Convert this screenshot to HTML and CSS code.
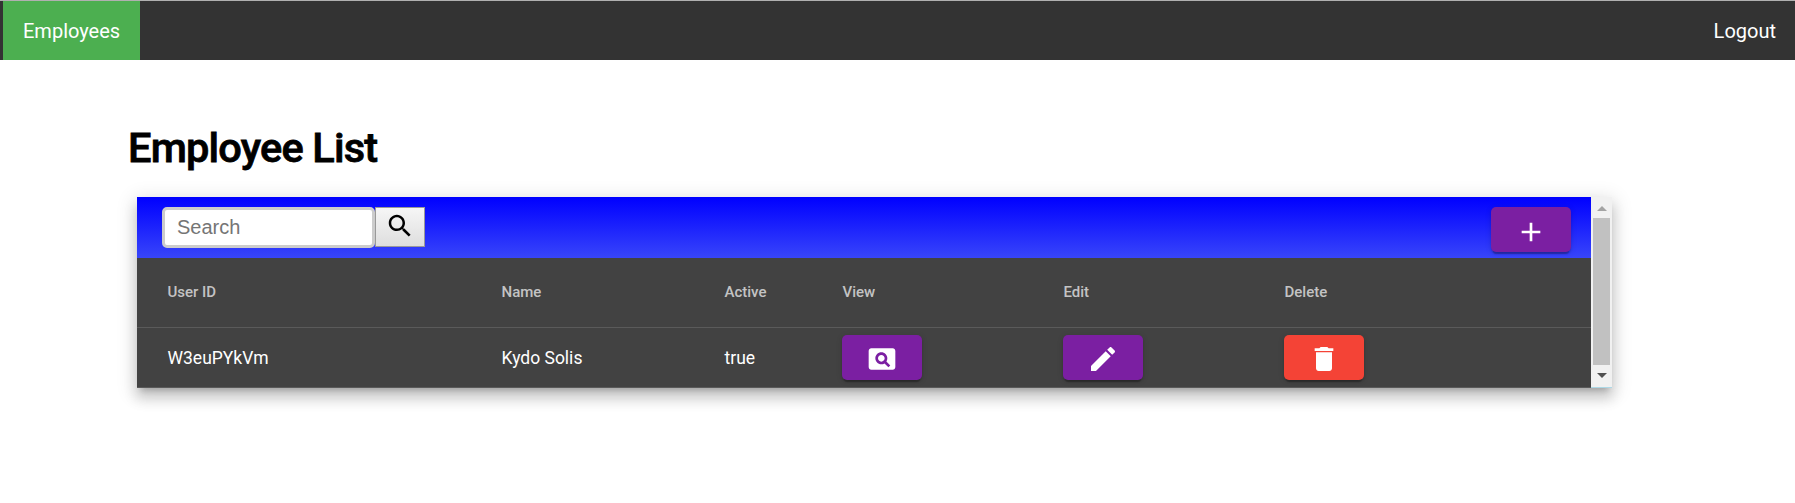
FILE: index.html
```html
<!DOCTYPE html>
<html lang="en">
<head>
<meta charset="utf-8">
<title>Employee List</title>
<link rel="stylesheet" href="styles.css">
</head>
<body>
<nav class="nav">
  <a class="nav-link active">Employees</a>
  <a class="nav-link">Logout</a>
</nav>
<main class="page">
  <h1 class="title">Employee List</h1>
  <section class="card">
    <div class="content">
      <div class="toolbar">
        <div class="search">
          <input class="search-input" type="text" placeholder="Search">
          <button class="search-btn" aria-label="Search"><svg viewBox="0 0 24 24"><path d="M15.5 14h-.79l-.28-.27C15.41 12.59 16 11.11 16 9.5 16 5.91 13.09 3 9.5 3S3 5.91 3 9.5 5.91 16 9.5 16c1.61 0 3.09-.59 4.23-1.57l.27.28v.79l5 4.99L20.49 19l-4.99-5zm-6 0C7.01 14 5 11.99 5 9.5S7.01 5 9.5 5 14 7.01 14 9.5 11.99 14 9.5 14z"/></svg></button>
        </div>
        <button class="btn add" aria-label="Add"><svg viewBox="0 0 24 24"><path d="M19 13h-6v6h-2v-6H5v-2h6V5h2v6h6v2z"/></svg></button>
      </div>
      <div class="row head">
        <span>User ID</span><span>Name</span><span>Active</span><span>View</span><span>Edit</span><span>Delete</span>
      </div>
      <div class="row">
        <span>W3euPYkVm</span><span>Kydo Solis</span><span>true</span>
        <button class="btn" aria-label="View"><svg viewBox="0 0 24 24"><path d="M11.5 9C10.12 9 9 10.12 9 11.5s1.12 2.5 2.5 2.5 2.500-1.120 2.500-2.500S12.880 9 11.500 9zM20 4H4c-1.100 0-2 .9-2 2v12c0 1.100.9 2 2 2h16c1.100 0 2-.9 2-2V6c0-1.100-.9-2-2-2zm-3.210 14.210l-2.910-2.910c-.69.44-1.510.7-2.390.7C9.010 16 7 13.990 7 11.500S9.010 7 11.500 7 16 9.010 16 11.500c0 .88-.26 1.690-.7 2.390l2.910 2.900-1.420 1.420z"/></svg></button>
        <button class="btn" aria-label="Edit"><svg viewBox="0 0 24 24"><path d="M3 17.25V21h3.750L17.810 9.940l-3.750-3.750L3 17.250zM20.710 7.040c.39-.39.39-1.020 0-1.410l-2.340-2.340c-.39-.39-1.020-.39-1.410 0l-1.830 1.830 3.750 3.750 1.830-1.830z"/></svg></button>
        <button class="btn warn" aria-label="Delete"><svg viewBox="0 0 24 24"><path d="M6 19c0 1.100.9 2 2 2h8c1.100 0 2-.9 2-2V7H6v12zM19 4h-3.500l-1-1h-5l-1 1H5v2h14V4z"/></svg></button>
      </div>
    </div>
    <div class="scrollbar">
      <svg class="arrow up" viewBox="0 0 10 5"><path d="M5 0l5 5H0z"/></svg>
      <div class="thumb"></div>
      <svg class="arrow" viewBox="0 0 10 5"><path d="M0 0h10L5 5z"/></svg>
    </div>
  </section>
</main>
</body>
</html>
```
FILE: styles.css
```css
* { box-sizing: border-box; }
body { margin: 0; min-height: 100vh; background: #fff; font-family: Roboto, sans-serif; }

.nav {
  display: flex;
  justify-content: space-between;
  height: 60px;
  padding-left: 3px;
  border-top: 1px solid #b0b0b0;
  background: #333;
}
.nav-link {
  display: flex;
  align-items: center;
  padding: 1px 19px 0 20px;
  color: #fff;
  font-size: 20px;
}
.nav-link.active { width: 137px; background: #4caf50; }

.page { padding: 61px 183px 60px 128px; }
.title { margin: 0; font-size: 41.5px; line-height: 54px; font-weight: 500; letter-spacing: -0.8px; -webkit-text-stroke: 0.8px #000; }

.card {
  display: flex;
  margin: 22px 0 0 9px;
  width: 1475px;
  height: 191px;
  background: #424242;
  box-shadow: 0 6px 6px -4px rgba(0,0,0,.2), 0 10px 12px 1px rgba(0,0,0,.14), 0 4px 18px 3px rgba(0,0,0,.12);
}
.content { flex: 1; }

.toolbar {
  display: flex;
  justify-content: space-between;
  height: 61px;
  padding: 10px 20px 0 25px;
  background: linear-gradient(#0000ff, #3845fa);
}
.search { display: flex; align-items: flex-start; }
.search-input {
  width: 213px;
  height: 41px;
  padding: 0 12px;
  border: 3px solid #ccc;
  border-radius: 5px;
  background: #fff;
  font: 20px "Liberation Sans", sans-serif;
}
.search-input::placeholder { color: #757575; }
.search-btn {
  width: 50px;
  height: 40px;
  padding: 0 0 3px 9px;
  border: 1px solid #999;
  background: linear-gradient(#f6f6f6, #dedede);
}
.search-btn svg { display: block; width: 30px; height: 30px; }

.btn {
  display: flex;
  align-items: center;
  justify-content: center;
  width: 80px;
  height: 45px;
  padding: 3px 0 0;
  border: 0;
  border-radius: 5px;
  background: #7b1fa2;
  box-shadow: 0 4px 1px -2px rgba(0,0,0,.2), 0 2px 2px rgba(0,0,0,.14), 0 1px 6px rgba(0,0,0,.12);
}
.btn.add { padding-top: 5px; }
.btn.warn { background: #f44336; }
.btn svg { width: 32px; height: 32px; fill: #fff; }

.row {
  display: grid;
  grid-template-columns: 334px 223px 118px 221px 221px auto;
  align-items: center;
  height: 60px;
  padding-left: 30px;
  border-bottom: 1px solid #5a5a5a;
  color: #fff;
  font-size: 17.5px;
}
.row span { padding-left: 0.5px; }
.head { height: 70px; color: rgba(255,255,255,.7); font-size: 15px; font-weight: 500; }
.head span { padding-bottom: 2px; }

.scrollbar {
  display: flex;
  flex-direction: column;
  align-items: center;
  width: 21px;
  padding: 9px 0;
  border-bottom: 1px solid #add8e6;
  background: #f1f1f1;
}
.thumb { width: 17px; height: 147px; margin: 7px 0 8px; background: #c1c1c1; flex: none; }
.arrow { width: 10px; height: 5px; flex: none; fill: #505050; }
.arrow.up { fill: #a3a3a3; }
```
